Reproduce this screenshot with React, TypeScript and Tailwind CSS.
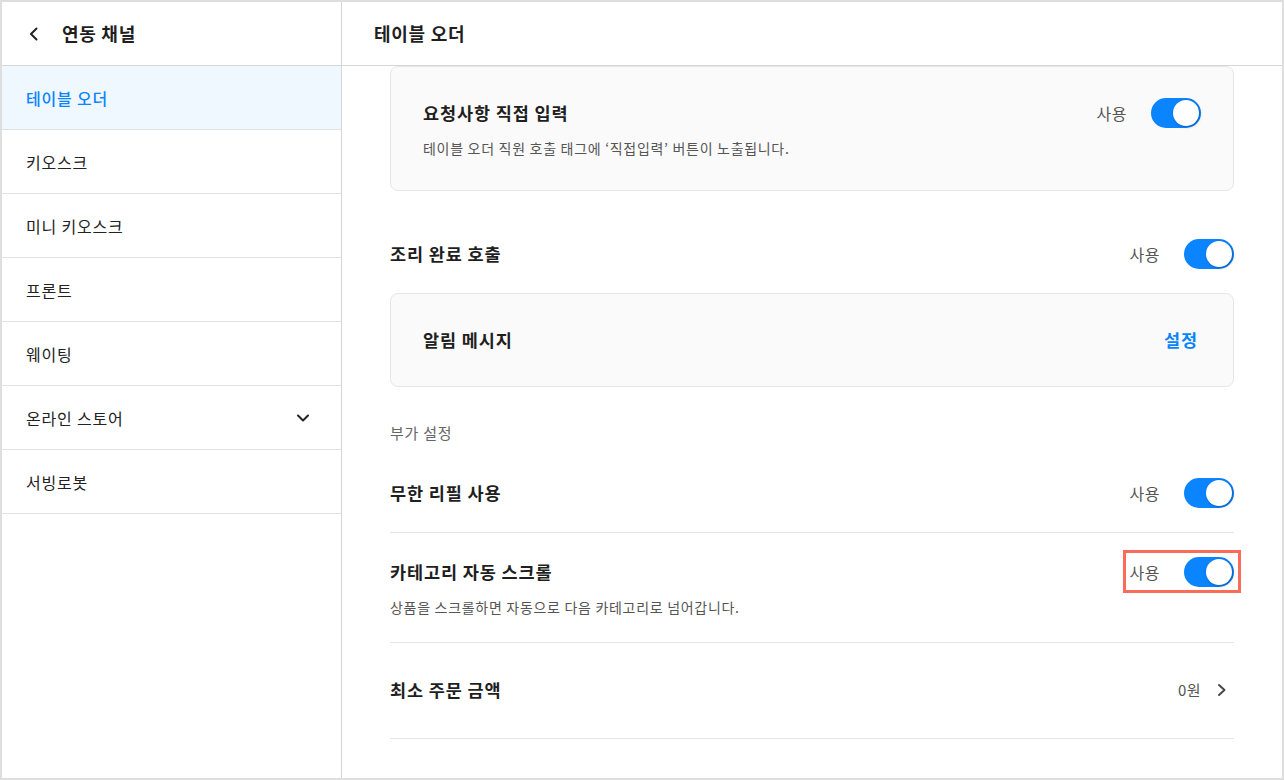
import { ReactNode } from 'react'

const menu = [
  { label: '테이블 오더', active: true },
  { label: '키오스크' },
  { label: '미니 키오스크' },
  { label: '프론트' },
  { label: '웨이팅' },
  { label: '온라인 스토어', expandable: true },
  { label: '서빙로봇' },
]

function Toggle() {
  return (
    <div className="relative h-[30px] w-[50px] shrink-0 rounded-full bg-[#0a84ff]">
      <div className="absolute right-[2px] top-[2px] h-[26px] w-[26px] rounded-full bg-white shadow-[1px_1px_3px_rgba(0,0,0,0.3)]" />
    </div>
  )
}

function UseSwitch({ highlight }: { highlight?: boolean }) {
  return (
    <div className="relative flex items-center gap-6">
      <span className="text-[16px] leading-6 tracking-[0.03em] text-[#555]">사용</span>
      <Toggle />
      {highlight && (
        <div className="pointer-events-none absolute -bottom-[6px] -left-[7px] -right-[7px] -top-[7px] border-[3px] border-[#fa6b5a]" />
      )}
    </div>
  )
}

function Title({ children }: { children: ReactNode }) {
  return (
    <p className="text-[17.5px] font-semibold leading-6 tracking-[0.05em] text-[#1f1f1f]">
      {children}
    </p>
  )
}

function Desc({ children }: { children: ReactNode }) {
  return (
    <p className="mt-[10px] text-[14px] leading-5 tracking-[0.05em] text-[#555]">{children}</p>
  )
}

export default function App() {
  return (
    <div
      className="flex h-[780px] w-[1284px] overflow-hidden border-2 border-[#dedede] bg-white"
      style={{ fontFamily: '"Noto Sans CJK KR", "Noto Sans", sans-serif' }}
    >
      {/* Sidebar */}
      <aside className="flex w-[340px] shrink-0 flex-col border-r border-[#d6d6d6]">
        <div className="flex h-[64px] items-center border-b border-[#d6d6d6] pl-[22px]">
          <svg width="20" height="20" viewBox="0 0 20 20" fill="none">
            <path d="M12.5 4.5L7 10l5.5 5.5" stroke="#222" strokeWidth="2" strokeLinecap="round" strokeLinejoin="round" />
          </svg>
          <span className="ml-[18px] text-[18px] font-bold tracking-[0.04em] text-[#1f1f1f]">
            연동 채널
          </span>
        </div>
        {menu.map((m) => (
          <div
            key={m.label}
            className={
              m.active
                ? 'flex h-[64px] items-center justify-between border-b border-[#e2e2e2] bg-[#eff7ff] px-6'
                : 'flex h-[64px] items-center justify-between border-b border-[#e2e2e2] px-6'
            }
          >
            <span
              className={
                m.active
                  ? 'text-[16px] font-medium tracking-[0.05em] text-[#0a84ff]'
                  : 'text-[16px] tracking-[0.05em] text-[#222]'
              }
            >
              {m.label}
            </span>
            {m.expandable && (
              <svg width="20" height="20" viewBox="0 0 20 20" fill="none" className="mr-[4px]">
                <path d="M5 7.5l5 5 5-5" stroke="#222" strokeWidth="2" strokeLinecap="round" strokeLinejoin="round" />
              </svg>
            )}
          </div>
        ))}
      </aside>

      {/* Main */}
      <main className="flex min-w-0 flex-1 flex-col">
        <div className="flex h-[64px] shrink-0 items-center border-b border-[#d6d6d6] pl-8">
          <span className="text-[18px] font-bold tracking-[0.04em] text-[#1f1f1f]">테이블 오더</span>
        </div>

        <div className="flex-1 overflow-hidden px-12">
          <div className="rounded-lg border border-[#e6e6e6] bg-[#fafafa] px-8 pb-8 pt-[31px]">
            <div className="flex h-[30px] items-center justify-between">
              <Title>요청사항 직접 입력</Title>
              <UseSwitch />
            </div>
            <Desc>테이블 오더 직원 호출 태그에 ‘직접입력’ 버튼이 노출됩니다.</Desc>
          </div>

          <div className="mt-12 flex h-[30px] items-center justify-between">
            <Title>조리 완료 호출</Title>
            <UseSwitch />
          </div>

          <div className="mt-6 flex h-[94px] items-center justify-between rounded-lg border border-[#e6e6e6] bg-[#fafafa] pl-8 pr-[35px]">
            <Title>알림 메시지</Title>
            <span className="text-[17.5px] font-bold tracking-[0.05em] text-[#0a84ff]">설정</span>
          </div>

          <p className="mt-[35px] text-[15px] leading-[22px] tracking-[0.05em] text-[#666]">부가 설정</p>

          <div className="mt-[10px] flex items-center justify-between border-b border-[#e6e6e6] py-6">
            <Title>무한 리필 사용</Title>
            <UseSwitch />
          </div>

          <div className="border-b border-[#e6e6e6] pb-[25px] pt-6">
            <div className="flex h-[30px] items-center justify-between">
              <Title>카테고리 자동 스크롤</Title>
              <UseSwitch highlight />
            </div>
            <Desc>상품을 스크롤하면 자동으로 다음 카테고리로 넘어갑니다.</Desc>
          </div>

          <div className="flex items-center justify-between border-b border-[#e6e6e6] pb-[33px] pt-8">
            <div className="flex h-[30px] items-center">
              <Title>최소 주문 금액</Title>
            </div>
            <div className="mr-[5px] flex items-center gap-3">
              <span className="text-[15px] tracking-[0.03em] text-[#555]">0원</span>
              <svg width="16" height="16" viewBox="0 0 16 16" fill="none">
                <path d="M6 3L11.5 8 6 13" stroke="#444" strokeWidth="1.9" strokeLinecap="round" strokeLinejoin="round" />
              </svg>
            </div>
          </div>
        </div>
      </main>
    </div>
  )
}
